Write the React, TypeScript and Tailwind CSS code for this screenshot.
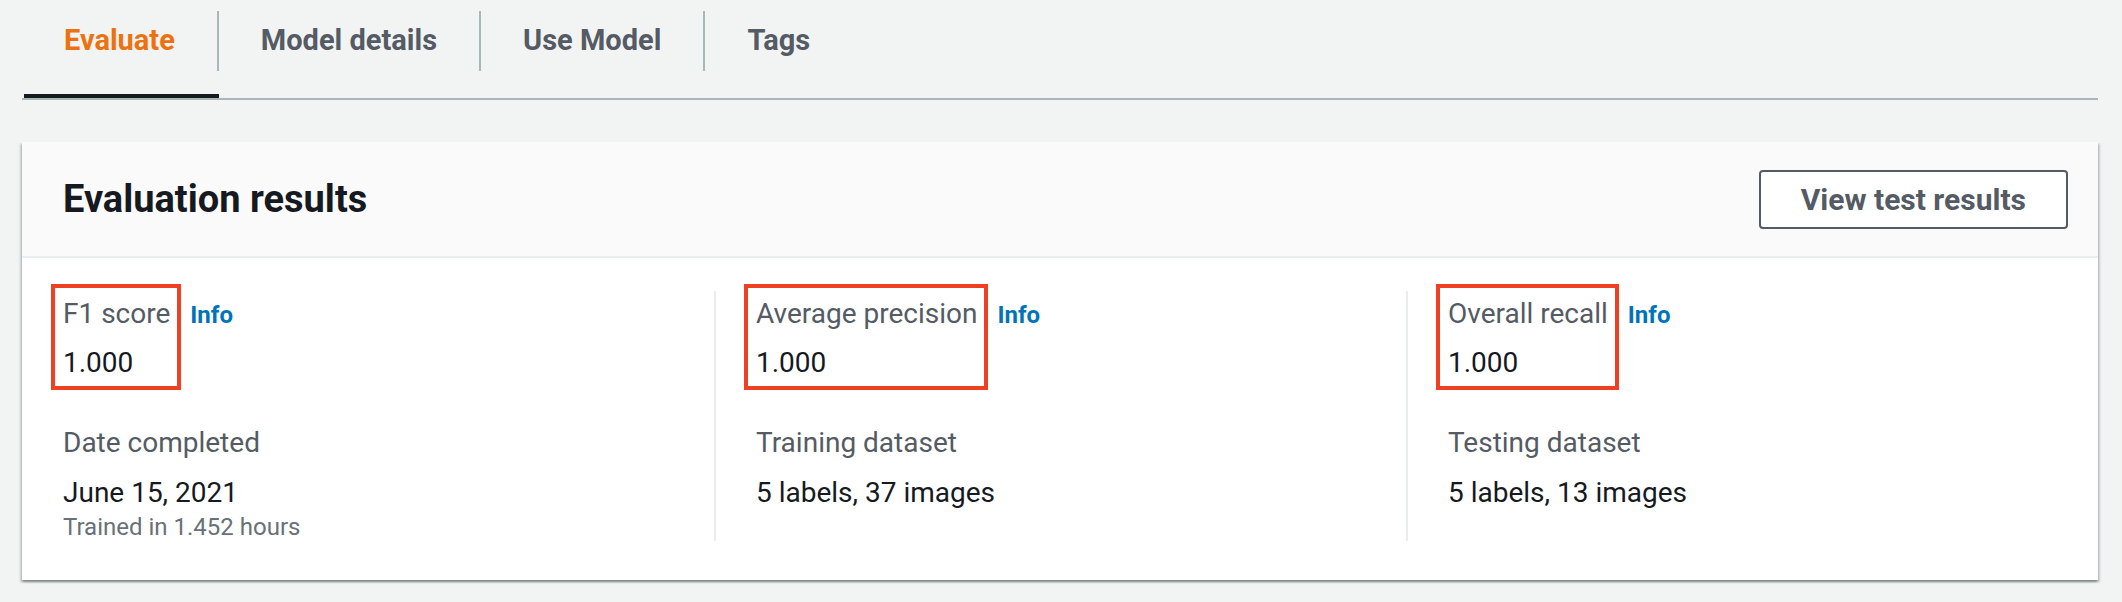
import type { ReactNode } from 'react';

const TABS = ['Evaluate', 'Model details', 'Use Model', 'Tags'];

interface MetricProps {
  label: string;
  value: string;
  first?: boolean;
  children: ReactNode;
}

function Metric({ label, value, first, children }: MetricProps) {
  return (
    <div
      className={
        first
          ? 'pl-[41px]'
          : 'border-l-2 border-[#eaeded] pl-[40px]'
      }
    >
      <div className="flex items-start">
        {/* highlighted label + value */}
        <div className="-ml-[12px] -mt-[7px] border-[4px] border-[#ee4124] pb-[3px] pl-[8px] pr-[7px] pt-[6px]">
          <div className="text-[28px] leading-[40px] text-[#545b64]">{label}</div>
          <div className="mt-[9px] text-[28px] leading-[40px] text-[#16191f]">{value}</div>
        </div>
        <a className="ml-[9px] mt-[4px] text-[24px] font-bold leading-[40px] text-[#0073bb]">Info</a>
      </div>
      <div className="mt-[33px]">{children}</div>
    </div>
  );
}

function KeyValue({ label, value, note }: { label: string; value: string; note?: string }) {
  return (
    <>
      <div className="text-[28px] leading-[40px] text-[#545b64]">{label}</div>
      <div className="mt-[10px] text-[28px] leading-[40px] text-[#16191f]">{value}</div>
      {note && <div className="text-[24px] leading-[28px] text-[#687078]">{note}</div>}
    </>
  );
}

export default function App() {
  return (
    <div className="min-h-[602px] bg-[#f2f3f3] pb-[22px] pl-[22px] pr-[24px] font-['Roboto','Liberation_Sans',sans-serif]">
      <div className="flex border-b-2 border-[#aab7b8] pl-[2px]">
        {TABS.map((tab, i) => {
          const active = i === 0;
          return (
            <div
              key={tab}
              className={`h-[98px] pt-[11px] ${active ? 'border-b-4 border-[#16191f]' : ''}`}
            >
              <span
                className={`flex h-[60px] items-center pr-[42px] text-[29px] font-bold ${
                  i === 0 ? 'pl-[40px]' : 'pl-[42px]'
                } ${active ? 'text-[#ec7211]' : 'text-[#545b64]'} ${
                  i < TABS.length - 1 ? 'border-r-2 border-[#aab7b8]' : ''
                }`}
              >
                {tab}
              </span>
            </div>
          );
        })}
      </div>

      <section className="mt-[42px] bg-white shadow-[0_2px_2px_0_rgba(0,28,36,0.3),2px_2px_2px_0_rgba(0,28,36,0.15),-2px_2px_2px_0_rgba(0,28,36,0.15)]">
        <div className="flex h-[116px] items-center justify-between border-b-2 border-[#eaeded] bg-[#fafafa] pl-[41px] pr-[30px]">
          <h2 className="text-[38px] font-bold leading-[48px] text-[#16191f]">Evaluation results</h2>
          <button className="h-[59px] rounded-[4px] border-2 border-[#545b64] bg-white px-[40px] text-[30px] font-bold text-[#545b64]">
            View test results
          </button>
        </div>

        <div className="grid grid-cols-3 pb-[39px] pt-[33px]">
          <Metric label="F1 score" value="1.000" first>
            <KeyValue label="Date completed" value="June 15, 2021" note="Trained in 1.452 hours" />
          </Metric>
          <Metric label="Average precision" value="1.000">
            <KeyValue label="Training dataset" value="5 labels, 37 images" />
          </Metric>
          <Metric label="Overall recall" value="1.000">
            <KeyValue label="Testing dataset" value="5 labels, 13 images" />
          </Metric>
        </div>
      </section>
    </div>
  );
}
